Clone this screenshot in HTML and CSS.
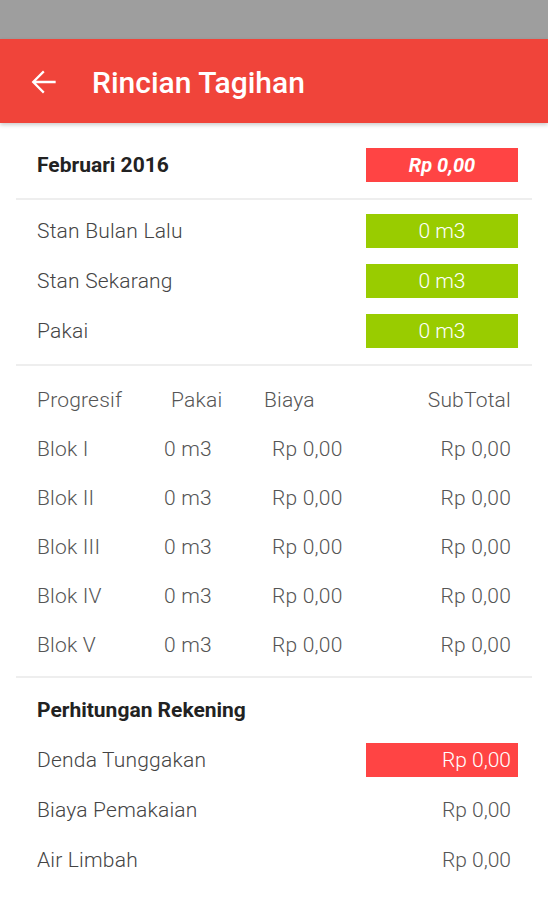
FILE: index.html
```html
<!DOCTYPE html>
<html lang="id">
<head>
    <meta charset="UTF-8">
    <meta name="viewport" content="width=device-width, initial-scale=1.0">
    <title>Rincian Tagihan</title>
    <link rel="stylesheet" href="styles.css">
</head>
<body>

<div class="status-bar"></div>

<!-- App Bar -->
<header class="app-bar">
    <svg class="back" width="38" height="38" viewBox="0 0 24 24">
        <path d="M20 11.2H7.6l5.4-5.4L12 4.8l-7.2 7.2 7.2 7.2 1-1-5.4-5.4H20v-1.6z" fill="#fff"/>
    </svg>
    <h1 class="title">Rincian Tagihan</h1>
</header>

<!-- Periode -->
<section class="section top">
    <div class="row">
        <span class="label bold">Februari 2016</span>
        <span class="box red total">Rp 0,00</span>
    </div>
</section>
<div class="divider"></div>

<!-- Stan meter -->
<section class="section meter">
    <div class="row">
        <span class="label">Stan Bulan Lalu</span>
        <span class="box green">0 m3</span>
    </div>
    <div class="row">
        <span class="label">Stan Sekarang</span>
        <span class="box green">0 m3</span>
    </div>
    <div class="row">
        <span class="label">Pakai</span>
        <span class="box green">0 m3</span>
    </div>
</section>
<div class="divider"></div>

<!-- Progresif -->
<section class="section progresif">
    <div class="prog-row head">
        <span>Progresif</span>
        <span class="h-pakai">Pakai</span>
        <span class="h-biaya">Biaya</span>
        <span class="num">SubTotal</span>
    </div>
    <div class="prog-row">
        <span>Blok I</span><span>0 m3</span><span>Rp 0,00</span><span class="num">Rp 0,00</span>
    </div>
    <div class="prog-row">
        <span>Blok II</span><span>0 m3</span><span>Rp 0,00</span><span class="num">Rp 0,00</span>
    </div>
    <div class="prog-row">
        <span>Blok III</span><span>0 m3</span><span>Rp 0,00</span><span class="num">Rp 0,00</span>
    </div>
    <div class="prog-row">
        <span>Blok IV</span><span>0 m3</span><span>Rp 0,00</span><span class="num">Rp 0,00</span>
    </div>
    <div class="prog-row">
        <span>Blok V</span><span>0 m3</span><span>Rp 0,00</span><span class="num">Rp 0,00</span>
    </div>
</section>
<div class="divider"></div>

<!-- Perhitungan -->
<section class="section rekening">
    <div class="row">
        <span class="label bold">Perhitungan Rekening</span>
    </div>
    <div class="row">
        <span class="label">Denda Tunggakan</span>
        <span class="box red right">Rp 0,00</span>
    </div>
    <div class="row">
        <span class="label">Biaya Pemakaian</span>
        <span class="box right">Rp 0,00</span>
    </div>
    <div class="row">
        <span class="label">Air Limbah</span>
        <span class="box right">Rp 0,00</span>
    </div>
</section>

</body>
</html>
```

FILE: styles.css
```css
body {
    margin: 0;
    width: 548px;
    height: 900px;
    overflow: hidden;
    background-color: #fff;
    font-family: Roboto, "Liberation Sans", sans-serif;
    color: #555;
}

.status-bar {
    height: 39px;
    background-color: #9e9e9e;
}

.app-bar {
    height: 84px;
    background-color: #f0443a;
    display: flex;
    align-items: center;
    box-shadow: 0 2px 4px rgba(0,0,0,.2);
    position: relative;
}

.back {
    margin-left: 24px;
    margin-top: 2px;
}

.title {
    margin: 2px 0 0 30px;
    color: #fff;
    font-size: 30px;
    font-weight: 500;
}

.divider {
    height: 2px;
    margin: 0 16px;
    background-color: #eee;
}

.section {
    padding: 0 30px 0 37px;
}

.row {
    display: flex;
    align-items: center;
    justify-content: space-between;
    height: 50px;
}

.label {
    font-size: 21px;
    font-weight: 300;
    letter-spacing: 0.2px;
    color: #444;
}

.label.bold {
    font-size: 21px;
    font-weight: 700;
    letter-spacing: 0;
    color: #222;
}

.box {
    width: 152px;
    height: 34px;
    line-height: 34px;
    text-align: center;
    font-size: 21px;
    font-weight: 300;
    color: #fff;
}

.box.red { background-color: #ff4444; }
.box.green { background-color: #99cc00; }

.box.total {
    font-style: italic;
    font-weight: 700;
    font-size: 20px;
}

.box.right {
    text-align: right;
    padding-right: 7px;
    box-sizing: border-box;
}

.box.right:not(.red) { color: #555; }

.section.top { padding-top: 17px; padding-bottom: 8px; }

.section.meter { padding-top: 6px; padding-bottom: 8px; }

.section.progresif { padding-top: 10px; padding-bottom: 7px; padding-right: 37px; }

.prog-row {
    display: grid;
    grid-template-columns: 127px 108px 1fr auto;
    align-items: center;
    height: 49px;
    font-size: 21px;
    font-weight: 300;
    letter-spacing: 0.2px;
    color: #555;
}

.prog-row.head { height: 48px; }

.h-pakai { padding-left: 7px; }
.h-biaya { margin-left: -8px; }

.num { text-align: right; }

.section.rekening { padding-top: 7px; }
```
